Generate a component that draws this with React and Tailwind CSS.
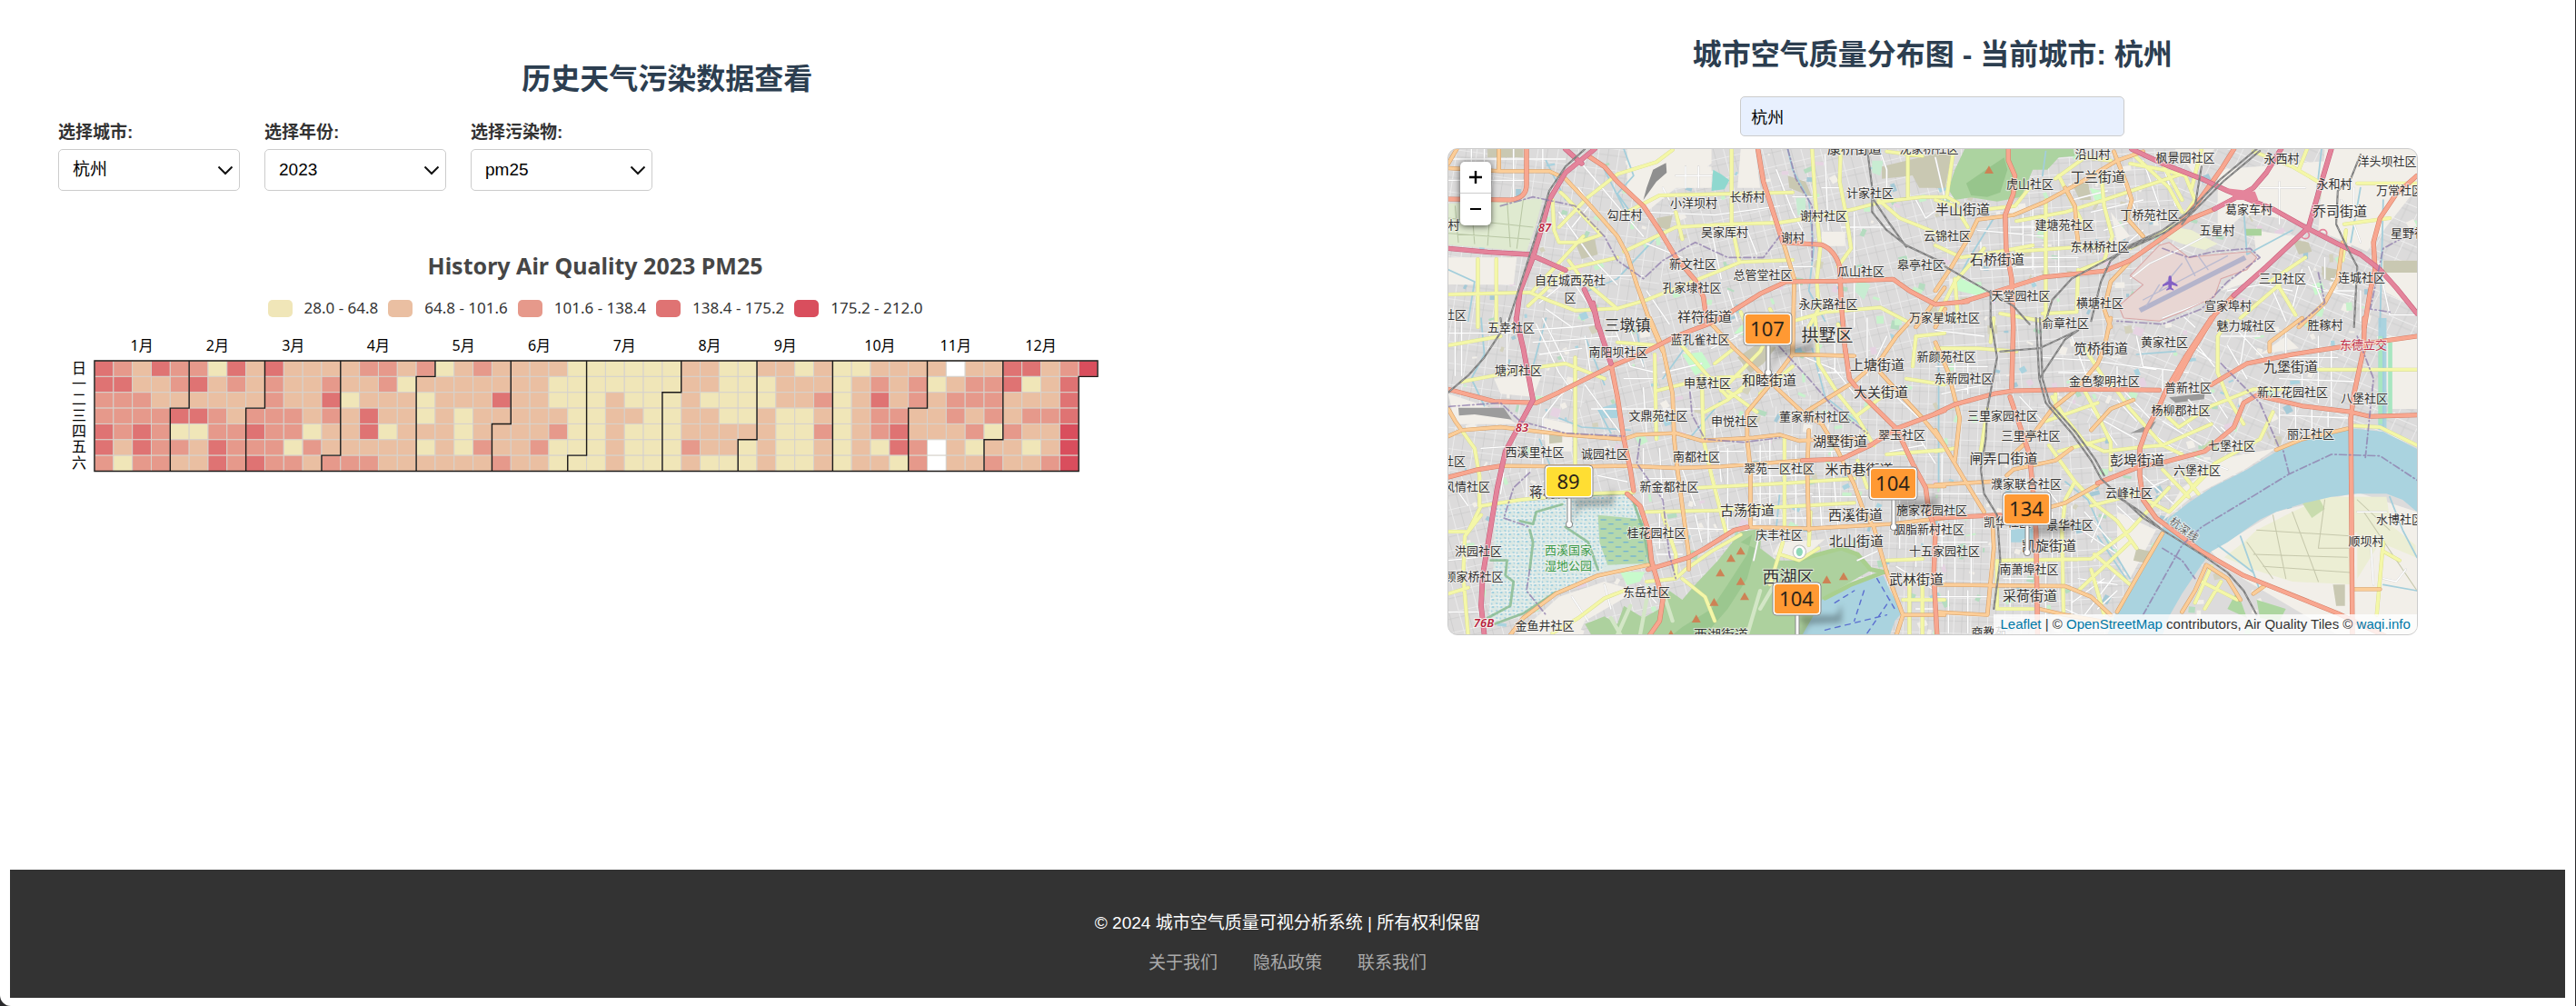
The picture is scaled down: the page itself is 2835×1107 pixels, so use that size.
import React from "react";

const SANS = "font-['Liberation_Sans','Noto_Sans_CJK_SC',sans-serif]";
const CHART_FONT = "font-['Noto_Sans','Noto_Sans_CJK_SC',sans-serif]";

/* ------------------------------------------------------------------ */
/* Calendar heat map                                                    */
/* ------------------------------------------------------------------ */

const LEVELS = {
  Y: "#f0e6b8",
  O: "#eabfa2",
  S: "#e6998b",
  R: "#df7373",
  D: "#d94e5d",
  W: "#ffffff",
};

const LEGEND = [
  ["28.0 - 64.8", "bg-[#f0e6b8]"],
  ["64.8 - 101.6", "bg-[#eabfa2]"],
  ["101.6 - 138.4", "bg-[#e6998b]"],
  ["138.4 - 175.2", "bg-[#df7373]"],
  ["175.2 - 212.0", "bg-[#d94e5d]"],
];

// One string per weekday, one letter per week of the year.
const WEEKDAY_ROWS = [
  "RSORSSYRO" + "ROOOOSSOS" + "YOSOOOOYY" + "YYYYOOYYOOYOYYOOOOWOORROSD",
  "RROOSROSO" + "SOOSOOSYO" + "OOOOOOYYY" + "YYYYOOYYYOOOYOSOSYOSSRYOR",
  "SSSOOOOOO" + "SOORYOOOY" + "OOOROOYYY" + "OYYYOYYYYOOSYOROSOSSSOOOR",
  "SSSSRRSOS" + "SSOSOROOY" + "OYOOOOOYY" + "OOYYOOYYOYYOYOSSOOSOSOSSR",
  "RSRSYYSSR" + "SSYOORYOO" + "OYOOOOSYY" + "OYYYOOOOOYYSYOSROOOSYSOOD",
  "RORSSORSS" + "SYSOOOOOY" + "OYSOOSYYY" + "OYYYSOOYOYYOYOYRSWOYOOYOD",
  "SYSSOORSR" + "SSOSSSOOO" + "OOOSOOYYY" + "OYYYOYYYOYYOYOOYSWOOSOOSD",
];

const WEEKDAYS = ["日", "一", "二", "三", "四", "五", "六"];
const MONTH_DAYS = [31, 28, 31, 30, 31, 30, 31, 31, 30, 31, 30, 31];

const CAL = { x: 104, y: 397, w: 20.83, h: 17.36 };

const monthStarts = MONTH_DAYS.map((_, i) =>
  MONTH_DAYS.slice(0, i).reduce((a, b) => a + b, 0)
);

function cx(col) {
  return CAL.x + col * CAL.w;
}
function cy(row) {
  return CAL.y + row * CAL.h;
}

function CalendarChart() {
  const boundary = (day) => {
    const col = Math.floor(day / 7);
    const row = day % 7;
    return row === 0
      ? `M${cx(col)} ${cy(0)}V${cy(7)}`
      : `M${cx(col + 1)} ${cy(0)}V${cy(row)}H${cx(col)}V${cy(7)}`;
  };
  return (
    <svg
      viewBox="64 366 1182 160"
      className={`mt-[15px] block h-auto w-full ${CHART_FONT}`}
      role="img"
      aria-label="History Air Quality 2023 PM25"
    >
      {WEEKDAY_ROWS.map((row, r) =>
        row.split("").map((k, c) => (
          <rect
            key={`${r}-${c}`}
            x={cx(c)}
            y={cy(r)}
            width={CAL.w}
            height={CAL.h}
            fill={LEVELS[k]}
            stroke="#d6d2cc"
            strokeWidth="1"
          />
        ))
      )}
      <g fill="none" stroke="#1c1a18" strokeWidth="1.4">
        {monthStarts.slice(1).map((d) => (
          <path key={d} d={boundary(d)} />
        ))}
        <path
          d={`M${cx(0)} ${cy(0)}H${cx(53)}V${cy(1)}H${cx(52)}V${cy(7)}H${cx(0)}Z`}
        />
      </g>
      <g fontSize="16" fill="#000" textAnchor="middle">
        {monthStarts.map((d, i) => {
          const first = Math.floor(d / 7);
          const last = Math.floor((d + MONTH_DAYS[i] - 1) / 7) + 1;
          return (
            <text key={d} x={cx((first + last) / 2)} y="386">
              {i + 1}月
            </text>
          );
        })}
        {WEEKDAYS.map((d, i) => (
          <text key={d} x="87" y={cy(i + 0.5) + 5}>
            {d}
          </text>
        ))}
      </g>
    </svg>
  );
}

/* ------------------------------------------------------------------ */
/* Map                                                                  */
/* ------------------------------------------------------------------ */

// Four survey sheets; each has its own origin in map units.
const SHEETS = {
  nw: [0, 0],
  ne: [1540, 0],
  sw: [0, 990],
  se: [1540, 990],
};

const AREAS = [
  // built-up gaps
  ["nw", "#f2efe9", "M590 432H850V480L740 560L650 640L590 560ZM740 490H850V560H740ZM1190 705H1262V752H1190ZM39 790H250L240 880H39ZM940 432H985L1000 560L930 560Z"],
  ["ne", "#f2efe9", "M870 500L1220 470L1150 680L960 640L870 720ZM1200 432H1484V560L1330 770L1180 700ZM1360 800H1484V960L1380 900ZM980 700L1110 720L970 870L880 900L990 790ZM740 432H860L800 520ZM540 640L600 720L560 740Z"],
  ["sw", "#f2efe9", "M180 200L330 180L300 260L200 250ZM39 250L180 300L250 350L60 350ZM380 920L520 870L620 900L460 1000L440 1046H250ZM330 330L420 350V440H340ZM1060 740L1200 730L1120 800L1040 780Z"],
  ["se", "#f2efe9", "M850 770L1050 640L1300 575L1484 640V1046H1240L900 830ZM700 670L790 590L960 495L1050 430L900 460L760 560ZM560 640L680 700L600 860L560 780ZM1000 120L1080 60L1120 100ZM1360 60H1484V300H1400Z"],
  // parks, farmland, woods
  ["nw", "#dfead0", "M39 612L330 596L310 680L280 770L39 748Z"],
  ["nw", "#c8ecd2", "M1110 590H1140V650H1115ZM1345 470L1380 470L1370 520L1345 510ZM1300 860L1340 880L1320 930L1290 900Z"],
  ["nw", "#8fd8cf", "M855 500L880 515L905 535L890 565L850 570Z"],
  ["nw", "#c9c8b2", "M1085 520L1140 540L1160 590L1090 560ZM1375 490L1568 440V560L1490 560L1470 520L1375 530ZM430 740L490 730L500 780L450 795ZM680 660L730 650L720 700L690 690ZM160 432H270V460H160Z"],
  ["ne", "#c9c8b2", "M0 450L50 450L30 560L0 560ZM420 545L445 600L480 600L470 540ZM1380 800H1484V840H1380ZM1100 730L1150 740L1160 770L1120 780ZM1190 820L1240 830L1225 870L1195 860Z"],
  ["ne", "#acd3a0", "M60 500L90 432H425L430 455L380 460L345 500L300 500L265 590L190 605L110 592L60 600L40 565Z"],
  ["ne", "#97c58c", "M95 545L170 490L212 460L222 500L200 575L160 590L110 585Z"],
  ["ne", "#c8facc", "M60 850L160 900L130 915L70 900ZM475 560L510 570L525 602L497 612ZM1160 880L1190 870L1200 900L1170 915Z"],
  ["ne", "#a9d39c", "M955 695H1005V718H955Z"],
  ["ne", "#ecefd2", "M700 720L760 745L830 765L870 745L790 700L740 690Z"],
  ["ne", "#e8d6d3", "M600 850L690 750L720 740L780 790L870 780L970 770L990 790L960 830L880 860L860 920L760 970L690 1000L580 990L565 950L640 880Z"],
  ["sw", "#dbe8e4", "M180 610L610 585L640 700L655 815L500 840L370 905L270 975L160 1010L180 800Z"],
  ["sw", "#b4d8ad", "M500 650L640 665L652 810L530 815L505 740Z"],
  ["sw", "#add19e", "M940 705L1005 695L1000 760L1050 800L1110 800L1250 760L1300 780L1345 830L1200 920L1190 940L1150 1046H480L460 1010L520 985L560 1010L580 950L640 990L690 960L720 900L760 930L800 880L870 800Z"],
  ["sw", "#9bc78f", "M940 740L975 715L960 780L900 880L850 960L760 1020L730 1046H830L900 960L960 860L985 760Z"],
  ["sw", "#aad3df", "M1190 930L1280 880L1380 850L1400 900L1440 970L1415 1000L1400 1046H1130L1160 990ZM500 300L560 280L560 330L520 330ZM1400 50L1420 60L1410 90Z"],
  ["sw", "#c9c8b2", "M930 130L985 90L1050 95L1010 150L970 182ZM350 385H390V410L350 415Z"],
  ["sw", "#c8facc", "M760 120L820 112L848 160L800 190ZM568 838H645L630 870L590 882ZM920 50L945 20L960 60Z"],
  ["se", "#eceed4", "M990 700L1100 640L1200 590L1390 590L1400 660L1290 710V880L1100 870L980 830L890 790L950 740ZM1300 660L1400 680L1480 750V790L1370 740L1300 860Z"],
  ["se", "#c9dcae", "M1130 610L1180 590L1200 630L1160 660ZM820 430L850 400L880 440Z"],
  ["se", "#add6a0", "M990 930L1080 960L1060 1000L1000 990ZM930 900L900 960L960 990Z"],
  ["se", "#aad3df", "M530 1046L555 975L600 890L680 730L720 660L780 610L850 560L960 500L1060 435L1150 400L1290 365L1380 375L1484 432V640L1440 600L1390 580L1300 580L1220 590L1140 610L1050 640L1000 665L900 740L850 770L810 830L760 910L720 985L700 1046ZM1365 0H1390V370H1365ZM230 700L300 690L300 740H230Z"],
  ["se", "#a8e6c0", "M1365 60H1380V350H1365ZM1395 80H1408V330H1395Z"],
  ["se", "#c9c8b2", "M620 760L660 770L650 810L610 800ZM1225 880H1262V950H1235Z"],
];

const ROAD_STYLES = [
  { key: "street", casing: "#cfcfcf", cw: 6, fill: "#ffffff", w: 4 },
  { key: "yellow", casing: "#d7da8c", cw: 12, fill: "#f4f7a8", w: 10 },
  { key: "orange", casing: "#d69c62", cw: 13, fill: "#fbcd98", w: 10 },
  { key: "salmon", casing: "#d57c64", cw: 15, fill: "#f8a790", w: 12 },
  { key: "pink", casing: "#c65a78", cw: 16, fill: "#e4849b", w: 13 },
];

const ROADS = {
  street: [
    ["nw", "M39 535H280M110 432V600M150 432V600M240 432V590M330 432V500M39 465H400M450 480L560 620L640 720M440 560L520 680M380 640L480 790L560 880M650 640L860 650L1060 620M740 520H850M770 490V560M810 490V560M1050 500L1100 640L1130 700M1100 590H1160M1290 640V1020M1190 560H1250M1200 450L1210 700M700 560L720 600M320 940L400 870L520 850L640 850M340 960L420 1020M430 880L480 960M850 700L880 860M960 700L990 780M640 740L760 790M480 610L420 690M1250 690H1400M1480 600L1510 660L1560 620M1100 900V1020M900 900L930 1000M650 900L720 1010M1060 820H1160M1120 870L1130 1010M1370 440L1390 500L1390 560"],
    ["ne", "M0 460L30 600M130 700L340 720M140 740V830L340 820M270 650V760M300 620V830M380 690V840M230 690H440M240 790H440M250 820H440M420 600L530 570M560 500L620 640M640 470L690 620M700 480L740 620M480 640L640 600M520 700L640 660M570 760L640 700M600 860L660 810L760 760L900 680M1060 540V680M1000 560H1140M1250 600L1290 680L1310 740M1290 560V660M1250 630H1330M900 900L1000 880L1100 900M1080 850L1200 900L1300 900M1130 830L1100 960M1150 820L1200 960M1220 860L1290 870M1210 900L1290 920M1200 790V860M1310 900V1000M1040 900L1080 1000M700 990L820 940M760 980L800 1020M1380 880L1400 980H1484"],
    ["sw", "M60 0V190M80 0V190M39 50H240M220 0V180M310 20L380 180L420 240M330 0L400 150M280 40L420 30L500 20M300 80L430 70L560 60M320 120L450 100M460 60L480 200M550 30L600 160L680 180M600 40L640 160M700 180L820 150M580 200L680 200M850 100L930 60M1000 20L920 60M1140 130L1230 170L1290 250M1180 180H1260M1230 60V180M1330 0V190M1390 60L1350 150M440 200L380 260L330 330V400M460 220L570 380M480 300H680M640 230L650 380M700 300H820M860 330V400M870 420L880 540M900 430V620M640 430V620M690 430L700 620M640 530H740M760 440H950M760 500L800 620M330 430V480M140 430L215 425M210 510L200 580M280 500V590M330 540L400 500M500 520L590 540M1000 420V680M1030 400V680M1110 420V680M980 440H1280M980 520H1140M980 580H1160M980 660H1290M1180 540L1190 690M1220 440L1240 690M1160 590H1330M650 690L960 700M690 640V760M800 650L820 740M840 640V740M900 640V700M670 740H760M680 780H760M100 620L60 560M39 800L130 790M39 970H140M420 920L470 1000M520 880L540 960M630 880L680 940M1000 700L980 800M1400 700L1568 720M1430 600V760M1480 640V820M1560 450V820M1420 820L1540 900M1470 870H1568M1480 960H1540M1300 800L1360 770M1480 380L1540 480M1400 440L1500 420M1420 260L1520 360"],
    ["se", "M0 40L150 60M60 100V230M100 100V250M0 160H160M20 250L150 220M260 260L330 340M280 400L380 380M330 130L480 140L680 170M380 180H500M420 60L480 230M560 160V230M700 170V240M620 60L640 160L780 180M760 160L800 100L850 140M800 80L860 160M900 90L960 200M930 40L1010 130M880 60L1000 60M960 20L940 150M1080 40V120M1130 150V250M1180 60V280M1220 100V290M1060 130H1240M1060 200L1300 210M1060 320L1270 330M1060 250L1060 380M1110 290V380M1160 300V390M1210 310V360M560 270L620 340M580 240L660 330M480 300L560 420M520 340L620 400M700 340L820 420M740 300L800 380M780 270L880 380M640 450L760 440M680 390L760 450M820 200L900 330M800 460L900 500M860 440L930 410M880 360L960 440M640 520L740 620M660 560L740 520M340 560L400 640M240 540L300 560M0 580L150 580M0 740H160M60 660V880M110 660V880M210 860H300M230 700V960M340 800V1000M360 640V800M420 620V980M450 700L560 780M460 640L560 760M520 640L480 740M560 620L620 680M440 860L560 880M420 940L520 860M460 980L560 840M500 960L560 900M400 960L480 1000M40 900V1040M100 900V1040M0 920H160M1340 720L1350 880M1380 860L1420 870L1450 830M1300 640H1390"],
  ],
  yellow: [
    ["nw", "M39 912L290 905L355 935L430 965L560 958L650 930L720 900L860 840L940 805L1100 798M130 795V1020M187 795V1020M285 950L330 905L400 830L560 790M360 600L365 700L380 740H440L510 715L400 590L385 575M380 690L470 590L560 515L680 475L730 435M580 770L740 690L900 680L1060 675L1180 655L1290 630L1380 605L1500 590H1568M590 640L690 585L900 580L1100 575M912 432V680L935 800M1160 432L1170 600L1185 760L1175 860M1248 432L1245 540L1265 650L1280 760L1240 820M1455 440V590M740 640L760 730M1365 600L1430 660L1500 690L1568 720M1390 440L1500 455M455 720L300 900M1100 1000L1200 970L1370 955L1450 1000M1030 960L1060 1020M940 970L960 1020M1175 870L1180 960L1150 1020M410 800L450 860L560 960"],
    ["ne", "M340 600V1000M250 670L400 640L520 600L770 510M250 770L450 755L520 760M600 480L700 500L770 520L800 600L750 680L650 730L600 760M510 500L520 620L545 720L520 800L450 830M370 530L460 460L540 470M55 440L35 590L70 610M0 750L80 790L200 770L300 750M0 1000L60 870L150 760M440 830L435 970L330 975M690 460L760 600M610 450L720 560L760 640M980 440L1100 490L1180 540M1145 432L1120 500M1260 680L1400 660M1484 545H1300M1265 700L1255 800M1030 870L1140 790M1055 880L1110 980M380 520L460 690M200 975L330 1000M0 600L60 620L100 690M165 630L245 620L290 560M820 432L790 560M940 990L1060 880M60 860L70 1000"],
    ["sw", "M39 90L200 60M80 210L130 200L330 160L400 150L520 200M430 130V480M39 705H100L140 620L260 600L450 580L610 575M80 370L120 430L135 520V620M140 650L90 720L85 850L100 1046M675 120L680 400M820 190L825 400L850 520L895 710M680 240L830 200L960 190M750 80L830 180L900 260L940 240M830 310L900 270L1000 180M650 640L860 635L1120 620L1290 610M810 560L1080 545L1290 530M1075 400V700M1170 0L1180 150L1240 250L1300 330L1350 420M1450 200L1568 220M1240 20L1260 80M760 860L830 920L860 1000M520 925L440 990L360 1040M520 925L580 900M650 870L740 860L770 830L850 770L940 715M700 650L740 780V860M1070 740L1030 880M1060 780L1120 800L1180 760M1390 800L1500 795M1440 930H1568M1460 860V1046M1500 860V1046M1390 450L1568 435M920 100L860 150M1050 0L1000 110L880 240M1300 470L1330 560M1568 50L1480 60L1470 160M560 80L680 90M900 240L990 310M1300 320L1400 240M39 910L100 890M1150 750L1155 640M1000 250L1100 160"],
    ["se", "M360 260L400 330L460 410L520 440L640 425L700 420L850 350M400 600L390 700L395 980M200 800L480 795L600 700L720 560M350 420L430 540L500 620L560 670L620 760M430 540L400 600M460 240L500 320L540 410V500M340 340L500 280M380 440L520 400M680 290L750 360L850 290L980 235H1080M870 60V180L900 260L950 350M870 60L900 10M460 100L520 200L560 240L600 300L700 420L760 450M790 560L860 480L1000 400L1040 310M760 510L810 580M650 600L720 640L840 510M700 500L780 590M480 620L620 580M0 100L130 100L250 110M180 0L170 80M490 780L600 880M440 900L600 740M480 830L520 980M190 800V960H300M850 820L800 940M880 870L830 960M820 870L930 930M1380 740L1360 980M1380 770L1430 800M1285 355L1370 360L1484 420M1180 170H1484M370 250V330M0 440L60 430M140 440L160 300"],
  ],
  orange: [
    ["nw", "M39 495L200 505H350L400 530L470 610L560 720L590 780L620 880L660 1000L700 1100M195 432V505M65 432L39 480M1060 700L1085 790L1105 860L1100 1110M1568 890L1480 1020"],
    ["ne", "M640 440L560 470L450 540L340 605L240 650L130 665L105 720L50 820L0 900M550 440L590 550L605 600L590 660L640 720M400 560L430 620L435 700L440 740M610 790L540 870L520 960L540 1020M1255 740L1240 860L1200 940L1120 1020M0 1020L30 960"],
    ["sw", "M39 390L80 370L200 360L400 385L580 400L620 385L740 380L820 405L980 395L1060 385L1120 405L1190 400L1300 400M39 300L60 340L80 370M200 488L430 490L590 488L740 495L880 490L1130 470M660 0L700 100L730 250L735 400L745 500L760 620L780 780V830M850 20L920 100L1000 180L1080 260L1140 320L1190 350L1240 440L1290 550L1320 640L1350 690L1390 840M1100 0V120L1290 125M1100 120L1030 220L960 310V400L970 500V690L1150 695L1400 680L1568 660M1150 370L1145 500L1150 700M1480 -10L1420 60L1375 130L1290 210L1140 310M655 815L500 850L370 910L270 990L230 1046M1440 980H1568M1390 840L1440 980L1420 1046M1370 180L1500 330L1568 420M1510 555H1568"],
    ["se", "M0 370L60 480L110 570L150 640M0 550L170 540M350 625L400 610L500 550M60 470L75 330L40 180L0 80M220 520L240 500L370 470L420 430M240 450L290 400L360 300L430 240L500 150L520 100L540 0M480 370L540 300L610 270M700 710L640 820L560 970M0 880L400 885L480 920L540 980M175 650L180 760L160 980L0 970M760 970L800 900L835 815L900 860L940 930M980 910L1020 880M1290 895H1370M1050 435L1130 400L1270 365M1030 110V80L1130 0M320 960L400 980L560 1010"],
  ],
  salmon: [
    ["nw", "M39 597L230 600Q280 595 280 550V432M470 455L520 490L560 540L640 620L690 700L740 790L800 865L825 920L835 1000M993 432L1010 540L1040 640L1070 740L1190 748Q1230 765 1245 820L1250 940L1262 1100M910 970L1000 910L1080 870L1240 868L1410 862L1460 900L1540 945L1640 935"],
    ["ne", "M860 630L780 665L680 740L600 800L520 835L330 855L240 885L80 938M920 432L880 500L800 620L760 670M225 432V470L245 520L240 580L215 650L218 760L235 860L240 1020L235 1220M920 915L860 980L790 1100L740 1200M1484 520L1420 580L1370 660L1350 740L1355 830L1340 900L1322 1020"],
    ["sw", "M39 235L180 275L310 280L380 245L540 160L650 110L740 60L840 20L910 -20M39 525L130 500L200 488M540 150L560 260L580 400L600 500L610 570M590 580L630 620L655 700L665 800L700 930L690 1000L660 1046M1262 100L1275 200L1320 260L1420 365L1470 480L1510 560L1520 640L1540 700L1535 850L1545 1046M1568 305L1420 365L1340 420L1250 465L1130 470M655 830L780 790L830 760L920 700L960 690"],
    ["se", "M0 315L60 285L180 250L240 240L480 235L690 238M850 0L770 130L710 240L690 290L650 370L630 430V520L640 600L680 660L820 770L950 850L1240 975L1484 1100M850 220L960 150L1100 120L1250 95L1484 60M1322 0L1320 100L1290 250L1280 330L1285 1046M500 545L630 490L690 480L830 440L920 360L950 280L990 255L1130 290L1280 310L1340 325L1484 320M230 260L290 450L300 560L310 700L315 1046M0 660L200 650"],
  ],
  pink: [
    ["nw", "M490 432L400 510L350 600L330 680L300 790L260 900L248 1000M39 760L160 772L290 780L400 832M400 432L450 480M458 895L490 970L500 1020"],
    ["ne", "M605 432L700 480L820 530L900 570L1040 630L1140 690L1240 745L1310 780L1370 830L1420 890L1484 975M1220 432L1190 540L1150 690L1100 740L1020 820L920 915M1065 432L1020 510L980 560L930 590L860 630"],
    ["sw", "M248 0L270 100L300 270L260 350L215 440L190 560L165 720L145 850L140 950L150 1046M485 -50L500 20L540 150"],
  ],
};

const RAILS = [
  ["nw", "M460 432L400 490L350 570L320 680L270 850L225 1000M1330 432L1345 560V640L1390 700L1450 750L1568 810M1350 600L1400 680L1450 755"],
  ["ne", "M990 432L880 530L780 640L700 700L600 750L540 800L510 870L480 1000M1000 438L890 536L788 646L706 708L604 758M700 700L420 860L360 930L340 1000M30 820L160 900L240 950L290 1010M820 490L800 620L760 680M1310 450L1280 530L1240 570L1235 680L1270 760L1300 820L1290 1020M170 900V1020"],
  ["sw", "M200 0L205 40L150 130L100 190L39 245"],
  ["se", "M170 0L190 130L160 300L155 400L140 500L150 580L190 650L200 800L180 960M310 0L320 200L340 280L420 380L480 470L510 530L580 600L640 660L820 780L900 840L950 900L990 980M322 0L330 200L352 280L432 376L492 466L520 520M200 110L320 100L440 40L400 70L320 200M560 590L620 630L700 700"],
];

const STREAMS = [
  ["nw", "M580 432L610 520L560 580L600 640M1085 432L1100 500L1150 600L1165 760L1150 900L1200 1000M520 500L600 670M340 470L400 600M470 900L560 860L700 700M39 830L120 870L100 1000"],
  ["ne", "M180 660L100 800L40 920M1190 432L1170 620M1380 600L1370 1020M950 630L960 780L1100 700M340 440L330 520M1310 560L1280 740"],
  ["sw", "M140 0L150 120L110 200L150 290M340 0L300 160M460 60L520 220M500 300L540 380M320 400L380 560M620 40L640 160M780 80L700 200M1160 100L1200 260L1330 370M860 300L780 400M380 330L450 360L600 370M1060 580L1050 690"],
  ["se", "M10 100V560M400 540L470 600L520 720L600 860M500 720L600 880M1380 60V360M620 120L740 110M940 720L1000 900M1380 880L1484 900M1400 590L1440 700L1484 790M870 750L980 840"],
];

const BOUNDARIES = [
  ["nw", "M200 620L300 590L430 620L520 720L560 800L640 860L700 800L800 740L900 790L1010 790L1060 720M1085 432L1110 530L1160 620L1160 800"],
  ["ne", "M700 760L780 790L860 770L970 760L1000 790L900 870L820 960L700 1010L560 1000M1180 840L1200 940L1120 1010M1484 700L1380 760L1340 960L1400 970"],
  ["sw", "M39 292L200 280L260 340L400 380L580 390M630 400L620 480L700 600L720 780L740 860M780 200L790 320L830 400L950 410L1060 395M1030 60L1150 200L1230 300L1330 380M290 510L240 560L210 660L290 690M290 830L280 900L340 980"],
  ["se", "M640 980L760 750L820 690L960 600L1090 515L1220 450L1370 455L1484 535M1090 515L1070 430M1325 460L1350 200L1300 60M880 150L1000 280L1060 430M700 760L760 800L800 860"],
];

const PEAKS = [
  ["ne", 165, 500], ["sw", 940, 768], ["sw", 910, 792], ["sw", 877, 840],
  ["sw", 940, 868], ["sw", 952, 918], ["sw", 858, 937], ["sw", 803, 992],
  ["sw", 1205, 863], ["sw", 1257, 852], ["sw", 725, 1043],
];

const LABELS = {
  nw: [
    ["康桥街道", 1290, 432, 15], ["沈家桥社区", 1520, 428], ["小洋坝村", 795, 610], ["长桥村", 960, 587],
    ["计家社区", 1338, 577], ["勾庄村", 582, 648], ["谢村社区", 1196, 652], ["吴家厍村", 891, 706],
    ["谢村", 1100, 722], ["新文社区", 791, 810], ["总管堂社区", 1008, 845], ["瓜山社区", 1310, 833],
    ["孔家埭社区", 790, 888], ["自在城西苑社", 413, 864], ["区", 413, 920], ["永庆路社区", 1210, 942],
    ["祥符街道", 829, 988, 15], ["皋亭社区", 1496, 814], ["村", 57, 680], ["社区", 60, 978],
    ["五幸社区", 232, 1021], ["三墩镇", 592, 1016, 17],
  ],
  ne: [
    ["沿山村", 485, 446], ["枫景园社区", 769, 458], ["永西村", 1066, 463], ["洋头坝社区", 1391, 470],
    ["虎山社区", 290, 545], ["丁兰街道", 500, 524, 15], ["永和村", 1228, 547], ["万常社区", 1431, 566],
    ["半山街道", 83, 634, 15], ["丁桥苑社区", 662, 648], ["葛家车村", 967, 630], ["乔司街道", 1247, 638, 15],
    ["建塘苑社区", 398, 682], ["五星村", 867, 700], ["星野社区", 1475, 707], ["云锦社区", 37, 718],
    ["东林桥社区", 508, 752], ["石桥街道", 190, 797, 15], ["三卫社区", 1069, 858], ["连城社区", 1312, 855],
    ["天堂园社区", 264, 916], ["横塘社区", 508, 940], ["宣家埠村", 901, 948], ["万家星城社区", 27, 986],
    ["俞章社区", 400, 1006], ["魅力城社区", 957, 1014], ["胜稼村", 1202, 1011],
  ],
  sw: [
    ["蓝孔雀社区", 815, 68], ["拱墅区", 1206, 62, 19], ["南阳坝社区", 562, 112], ["塘河社区", 255, 172],
    ["申慧社区", 836, 212], ["和睦街道", 1028, 208, 15], ["上塘街道", 1360, 155, 15], ["大关街道", 1372, 245, 15],
    ["新颜苑社区", 1573, 127], ["东新园社区", 1627, 198], ["文鼎苑社区", 686, 322], ["申悦社区", 922, 338],
    ["董家新村社区", 1168, 324], ["翠玉社区", 1435, 385], ["湖墅街道", 1247, 407, 15], ["西溪里社区", 305, 441],
    ["诚园社区", 522, 446], ["南都社区", 803, 456], ["翠苑一区社区", 1057, 494], ["米市巷街道", 1305, 500, 15],
    ["社区", 56, 470], ["风情社区", 95, 555], ["蒋村街道", 371, 577, 15], ["新金都社区", 719, 556],
    ["古荡街道", 960, 635, 15], ["西溪街道", 1294, 650, 15], ["施家花园社区", 1530, 632], ["胭脂新村社区", 1520, 696],
    ["桂花园社区", 681, 708], ["庆丰社区", 1057, 715], ["北山街道", 1297, 737, 15], ["洪园社区", 131, 768],
    ["顾家桥社区", 117, 853], ["十五家园社区", 1567, 768], ["西湖区", 1086, 862, 19], ["武林街道", 1481, 864, 15],
    ["东岳社区", 650, 903], ["金鱼井社区", 335, 1014], ["西湖街道", 879, 1048, 15],
  ],
  se: [
    ["笕桥街道", 509, 101, 15], ["黄家社区", 706, 78], ["九堡街道", 1095, 163, 15], ["金色黎明社区", 521, 206],
    ["普新社区", 777, 227], ["新江花园社区", 1100, 244], ["八堡社区", 1321, 264], ["杨柳郡社区", 755, 303],
    ["三里家园社区", 206, 320], ["三里亭社区", 293, 388], ["丽江社区", 1157, 382], ["七堡社区", 913, 421],
    ["闸弄口街道", 211, 464, 15], ["彭埠街道", 621, 470, 15], ["六堡社区", 807, 500], ["濮家联合社区", 281, 546],
    ["云峰社区", 595, 575], ["凯华社区", 220, 672], ["景华社区", 415, 680], ["水博社区", 1430, 664],
    ["顺坝村", 1327, 736], ["凯旋街道", 351, 753, 15], ["南萧埠社区", 287, 828], ["采荷街道", 292, 917, 15],
    ["商教苑", 165, 1035],
  ],
};

const MARKERS = [
  ["107", "sw", 948, -18, 180, "#ff9933"],
  ["89", "sw", 335, 485, 682, "#ffde33"],
  ["104", "sw", 1336, 493, 690, "#ff9933"],
  ["134", "se", 208, 577, 775, "#ff9933"],
  ["104", "sw", 1040, 873, 1070, "#ff9933"],
];

function at(sheet, u, v) {
  const [du, dv] = SHEETS[sheet];
  return [Math.round((u + du) / 2.8), Math.round((v + dv) / 3)];
}

// Small parks, ponds and plots scattered over the built-up area.
const PLOTS = (() => {
  let seed = 77;
  const next = () => {
    seed = (seed * 1103515245 + 12345) % 2147483648;
    return seed / 2147483648;
  };
  const tints = ["#c8f2cc", "#b5dcc0", "#aad3df", "#f2efe9", "#f2efe9", "#d3d1bd", "#e6d3e2", "#c8f2cc", "#a5c9d6"];
  return Array.from({ length: 620 }, () => ({
    x: Math.floor(40 + next() * 2980),
    y: Math.floor(432 + next() * 1600),
    w: Math.floor(6 + next() * 26),
    h: Math.floor(6 + next() * 24),
    a: Math.floor(next() * 60 - 30),
    fill: tints[Math.floor(next() * tints.length)],
  }));
})();

const BLOCKS = [
  ["streets-a", "M39 432H620L760 700L640 1000L300 1500H39Z"],
  ["streets-b", "M620 432H1560V1100L1000 1300L640 1000L760 700Z"],
  ["streets-c", "M1560 432H2300L2260 820L1900 1300L1560 1100Z"],
  ["streets-d", "M2300 432H3026V1400L2500 1500L1900 1300L2260 820Z"],
  ["streets-b", "M39 1500H300L640 1000L1000 1300L1400 2036H39Z"],
  ["streets-e", "M1000 1300L1560 1100L1900 1300L1960 1700L1860 2036H1400Z"],
  ["streets-c", "M1900 1300L2500 1500L2150 2036H1860L1960 1700Z"],
];

function StreetPattern({ id, w, h, angle }) {
  return (
    <pattern id={id} width={w} height={h} patternUnits="userSpaceOnUse" patternTransform={`rotate(${angle})`}>
      <path d={`M0 ${h / 3}H${w}M${w / 2} 0V${h}`} stroke="#c9c9c9" strokeWidth="2" fill="none" />
      <path d={`M0 0H${w}M0 0V${h}`} stroke="#eeeeee" strokeWidth="5" fill="none" />
    </pattern>
  );
}

function Sheet({ name, children }) {
  const [u, v] = SHEETS[name];
  return <g transform={`translate(${u} ${v})`}>{children}</g>;
}

function CityMap() {
  const halo = { stroke: "#f6f4f0", strokeWidth: 2, paintOrder: "stroke", strokeOpacity: 0.7 };
  const [parkX, parkY] = at("sw", 409, 764);
  const [railX, railY] = at("se", 760, 708);
  return (
    <svg
      viewBox="14 144 1066 534"
      preserveAspectRatio="xMidYMid slice"
      className="block h-auto w-full font-['Noto_Sans_CJK_SC',sans-serif]"
      role="img"
      aria-label="杭州空气质量地图"
    >
      <defs>
        <StreetPattern id="streets-a" w={62} h={70} angle={8} />
        <StreetPattern id="streets-b" w={58} h={66} angle={-14} />
        <StreetPattern id="streets-c" w={66} h={54} angle={-4} />
        <StreetPattern id="streets-d" w={72} h={60} angle={24} />
        <StreetPattern id="streets-e" w={52} h={58} angle={2} />
        <pattern id="wetland" width="26" height="24" patternUnits="userSpaceOnUse">
          <path d="M2 4h7v5h-4zM14 2l6 5-4 5zM5 14l6 2-2 6zM18 15h6v6h-8zM11 9l3 4" fill="#9fcfe0" />
          <path d="M0 12L12 11L14 24M12 11L14 0M26 12L14 14" stroke="#f5f7f5" strokeWidth="2" fill="none" />
        </pattern>
        <pattern id="marsh" width="46" height="30" patternUnits="userSpaceOnUse">
          <path d="M2 6H20M26 20H42" stroke="#5aa6e0" strokeWidth="3" />
        </pattern>
        <filter id="soft" x="-30%" y="-30%" width="160%" height="180%">
          <feGaussianBlur stdDeviation="3" />
        </filter>
      </defs>

      <g transform="scale(0.35714 0.33333)" strokeLinejoin="round" strokeLinecap="round">
        <rect x="0" y="400" width="3100" height="1700" fill="#dcdbdb" />
        {BLOCKS.map(([id, d]) => (
          <path key={d} d={d} fill={`url(#${id})`} />
        ))}
        {PLOTS.map((p, i) => (
          <rect
            key={i}
            x={p.x}
            y={p.y}
            width={p.w}
            height={p.h}
            fill={p.fill}
            transform={`rotate(${p.a} ${p.x} ${p.y})`}
          />
        ))}
        {AREAS.map(([s, fill, d]) => (
          <Sheet key={d} name={s}>
            <path d={d} fill={fill} />
          </Sheet>
        ))}
        <Sheet name="sw">
          <path
            d="M180 610L610 585L640 660L500 650L505 740L530 815L500 840L370 905L270 975L160 1010L180 800Z"
            fill="url(#wetland)"
          />
          <path d="M500 650L640 665L652 810L530 815L505 740Z" fill="url(#marsh)" />
          <path
            d="M230 602L600 577L640 700L660 815M260 670L300 680L310 640L390 615M290 830L300 740L290 700M170 800H220L215 850L240 870L230 950L160 990M400 690L470 740L500 830M370 905L270 975L180 1010"
            fill="none"
            stroke="#84b98c"
            strokeWidth="8"
            strokeOpacity="0.8"
          />
          <path d="M70 296L210 296L235 335L120 318L72 322Z" fill="#9c9c9c" />
          <path
            d="M1230 940L1290 900M1320 900L1290 1000M1360 860L1420 970M1200 1030L1390 980M1330 1040L1400 930"
            stroke="#5b6fd0"
            strokeWidth="4"
            strokeDasharray="16 16"
            fill="none"
          />
          <path d="M1110 800L1250 760L1300 780L1340 830L1390 840M1200 925L1280 880L1390 835" stroke="#a9cf8e" strokeWidth="14" fill="none" />
          <path d="M600 950L560 1046M650 930L630 1046M540 990L570 1046M700 900L730 1000M1000 900L960 1046M1060 850L1000 960" stroke="#d3e6c6" strokeWidth="12" fill="none" />
        </Sheet>
        <Sheet name="nw">
          <path d="M650 560L670 500L710 478L712 510L680 540L640 600Z" fill="#8f8f8f" />
          <path d="M60 620L70 740M110 610L120 745M170 605L160 750M220 600L230 755M270 600L250 760M39 660L300 690M39 710L290 730" stroke="#b9c7a5" strokeWidth="3" fill="none" />
        </Sheet>
        <Sheet name="se">
          <path d="M720 262L830 248L828 268L740 280ZM600 380L680 340L660 375Z" fill="#999" />
          <path
            d="M960 740L1040 860M1040 650L1080 860M1100 640L1180 870M1200 600L1180 760L1290 760M990 700L1290 720M980 780L1270 790M1010 820L1280 840M1300 600L1400 700M1320 640L1484 900"
            stroke="#c6c8ac"
            strokeWidth="3"
            fill="none"
          />
        </Sheet>
        {STREAMS.map(([s, d]) => (
          <Sheet key={d} name={s}>
            <path d={d} fill="none" stroke="#a3cedb" strokeWidth="5" />
          </Sheet>
        ))}
        {ROAD_STYLES.map((style) => (
          <g key={style.key} fill="none">
            {ROADS[style.key].map(([s, d]) => (
              <Sheet key={d} name={s}>
                <path d={d} stroke={style.casing} strokeWidth={style.cw} />
              </Sheet>
            ))}
            {ROADS[style.key].map(([s, d]) => (
              <Sheet key={d} name={s}>
                <path d={d} stroke={style.fill} strokeWidth={style.w} />
              </Sheet>
            ))}
          </g>
        ))}
        <Sheet name="ne">
          <path d="M898 562L985 572L995 600L925 600Z" fill="#e4849b" />
          <g fill="none" stroke="#e4849b" strokeWidth="5">
            <circle cx="1140" cy="716" r="12" />
            <circle cx="1194" cy="710" r="12" />
          </g>
          <path
            d="M600 850L690 750L720 740L780 790L870 780L970 770L990 790L960 830L880 860L860 920L760 970L690 1000L580 990L565 950L640 880Z"
            fill="none"
            stroke="#d9a5a5"
            strokeWidth="3"
          />
          <path d="M630 965L955 790" stroke="#b4b4cb" strokeWidth="16" strokeLinecap="butt" />
          <path d="M640 930L900 785M690 900L760 810M800 850L770 790M840 830L810 785M650 950L690 880" stroke="#bbbbd0" strokeWidth="4" fill="none" />
          <path
            d="M723 850Q728 850 728 860V868L746 880V886L728 880V890L734 895V899L723 895L712 899V895L718 890V880L700 886V880L718 868V860Q718 850 723 850Z"
            fill="#8461c4"
          />
        </Sheet>
        {RAILS.map(([s, d]) => (
          <Sheet key={d} name={s}>
            <path d={d} fill="none" stroke="#7d7d7d" strokeWidth="6" />
            <path d={d} fill="none" stroke="#b4b4b4" strokeWidth="2" strokeDasharray="12 12" />
          </Sheet>
        ))}
        {BOUNDARIES.map(([s, d]) => (
          <Sheet key={d} name={s}>
            <path d={d} fill="none" stroke="#8d7bab" strokeOpacity="0.75" strokeWidth="5" strokeDasharray="22 9 4 9" />
          </Sheet>
        ))}
        {PEAKS.map(([s, x, y]) => (
          <Sheet key={`${s}${x}${y}`} name={s}>
            <path d={`M${x} ${y - 13}L${x + 14} ${y + 13}H${x - 14}Z`} fill="#cd8255" />
          </Sheet>
        ))}
        <Sheet name="sw">
          <ellipse cx="1121" cy="772" rx="20" ry="22" fill="#fff" stroke="#bbb" strokeWidth="3" />
          <ellipse cx="1121" cy="772" rx="10" ry="14" fill="#8fd8b8" />
        </Sheet>
      </g>

      <g textAnchor="middle" fill="#333">
        {Object.entries(LABELS).map(([s, list]) =>
          list.map(([text, u, v, size = 13]) => {
            const [x, y] = at(s, u, v);
            return (
              <text key={`${s}${text}${u}`} x={x} y={y + 5} fontSize={size} {...halo}>
                {text}
              </text>
            );
          })
        )}
        <g fill="#3a9a4a" fontSize="13" {...halo}>
          <text x={parkX} y={parkY + 5}>西溪国家</text>
          <text x={parkX} y={parkY + 22}>湿地公园</text>
        </g>
        <text x={at("se", 1320, 86)[0]} y={at("se", 1320, 86)[1] + 5} fontSize="13" {...halo} fill="#c0304a">
          东德立交
        </text>
        <text x={railX} y={railY} fontSize="12" {...halo} fill="#666" transform={`rotate(38 ${railX} ${railY})`}>
          杭深线
        </text>
        <g fill="#b8203c" fontSize="13" fontStyle="italic" fontWeight="600" fontFamily="Noto Sans" {...halo} strokeOpacity="1">
          <text x={at("nw", 335, 690)[0]} y={at("nw", 335, 690)[1] + 5}>87</text>
          <text x={at("sw", 265, 360)[0]} y={at("sw", 265, 360)[1] + 5}>83</text>
          <text x={at("sw", 147, 1006)[0]} y={at("sw", 147, 1006)[1] + 5}>76B</text>
        </g>
      </g>

      {MARKERS.map(([value, s, u, v, tip, fill]) => {
        const [x, y] = at(s, u, v);
        const tipY = at(s, u, tip)[1];
        return (
          <g key={`${value}${u}`}>
            <path
              d={`M${x + 27} ${tipY}L${x + 36} ${y + 44}H${x + 30}V${y + 36}H${x + 70}L${x + 76} ${y + 24}V${y + 44}L${x + 40} ${y + 46}Z`}
              fill="#000"
              fillOpacity="0.28"
              filter="url(#soft)"
            />
            <path d={`M${x + 27} ${y + 35}V${tipY}`} stroke="#888" strokeWidth="5" />
            <circle cx={x + 27} cy={tipY} r="4" fill="#888" />
            <path d={`M${x + 27} ${y + 35}V${tipY}`} stroke="#fff" strokeWidth="3" />
            <circle cx={x + 27} cy={tipY} r="3" fill="#fff" />
            <rect x={x} y={y} width="53" height="36" rx="4" fill="#fff" stroke="#8a8a8a" strokeWidth="1" />
            <rect x={x + 2} y={y + 2} width="49" height="32" rx="3" fill={fill} />
            <text
              x={x + 26}
              y={y + 26}
              fontSize="22"
              fontFamily="Noto Sans"
              textAnchor="middle"
              fill="#2b2419"
            >
              {value}
            </text>
          </g>
        );
      })}
    </svg>
  );
}

/* ------------------------------------------------------------------ */
/* Page                                                                 */
/* ------------------------------------------------------------------ */

function SelectField({ id, label, options }) {
  return (
    <div className="flex w-[200px] flex-col gap-1">
      <label htmlFor={id} className="text-[19px] leading-7 font-bold text-[#333]">
        {label}
      </label>
      <div className="relative">
        <select
          id={id}
          className="h-[46px] w-full appearance-none rounded-[5px] border border-[#ccc] bg-white px-[15px] text-[19px] text-black"
        >
          {options.map((o) => (
            <option key={o}>{o}</option>
          ))}
        </select>
        <svg
          viewBox="0 0 18 11"
          className="pointer-events-none absolute top-[18px] right-[7px] h-[11px] w-[18px]"
          fill="none"
          stroke="#111"
          strokeWidth="2"
        >
          <path d="M1.5 1.5L9 9L16.5 1.5" />
        </svg>
      </div>
    </div>
  );
}

function HistoryPanel() {
  return (
    <section className="min-w-0 px-[26px] pt-[63px]">
      <h1 className="text-center text-[32px] leading-[48px] font-bold text-[#2c3e50]">
        历史天气污染数据查看
      </h1>
      <form className="mt-[21px] flex flex-wrap gap-[27px]">
        <SelectField id="city" label="选择城市:" options={["杭州"]} />
        <SelectField id="year" label="选择年份:" options={["2023"]} />
        <SelectField id="pollutant" label="选择污染物:" options={["pm25"]} />
      </form>
      <div className={`mt-[66px] w-full max-w-[1182px] ${CHART_FONT}`}>
        <h2 className="text-center text-[25px] leading-8 font-bold text-[#464646]">
          History Air Quality 2023 PM25
        </h2>
        <ul className="mt-[19px] flex flex-wrap justify-center gap-[11px]">
          {LEGEND.map(([text, swatch]) => (
            <li key={text} className="flex items-center gap-[13px] text-[17px] leading-6 text-[#333]">
              <span className={`h-[19px] w-[27px] rounded-[5px] ${swatch}`} />
              {text}
            </li>
          ))}
        </ul>
        <CalendarChart />
      </div>
    </section>
  );
}

function MapPanel() {
  return (
    <section className="flex min-w-0 flex-col items-center pt-9">
      <h1 className="text-center text-[32px] leading-[48px] font-bold text-[#2c3e50]">
        城市空气质量分布图 - 当前城市: 杭州
      </h1>
      <input
        type="text"
        aria-label="城市"
        defaultValue="杭州"
        className="mt-[22px] h-11 w-full max-w-[423px] rounded-[5px] border border-[#ccc] bg-[#e8f0fe] px-[11px] text-lg text-black"
      />
      <div className="relative mt-[13px] w-full max-w-[1068px] overflow-hidden rounded-[11px] border border-[#ccc] bg-[#ddd]">
        <CityMap />
        <div className="absolute top-[14px] left-[13px] flex w-[34px] flex-col overflow-hidden rounded-[5px] bg-white shadow-[0_1px_7px_rgba(0,0,0,0.65)]">
          <button type="button" aria-label="放大" className="flex h-[35px] items-center justify-center border-b border-[#ccc]">
            <svg viewBox="0 0 14 14" className="h-[14px] w-[14px]" stroke="#000" strokeWidth="2.4">
              <path d="M7 0V14M0 7H14" />
            </svg>
          </button>
          <button type="button" aria-label="缩小" className="flex h-[35px] items-center justify-center">
            <svg viewBox="0 0 14 14" className="h-[14px] w-[14px]" stroke="#000" strokeWidth="2">
              <path d="M1 6H13" />
            </svg>
          </button>
        </div>
        <p className="absolute right-0 bottom-0 bg-white/80 px-[7px] text-[15px] leading-[22px] text-[#333]">
          <a href="#leaflet" className="text-[#0078a8]">Leaflet</a> | ©{" "}
          <a href="#osm" className="text-[#0078a8]">OpenStreetMap</a> contributors, Air Quality Tiles ©{" "}
          <a href="#waqi" className="text-[#0078a8]">waqi.info</a>
        </p>
      </div>
    </section>
  );
}

export default function App() {
  return (
    <div className="min-h-screen bg-[#2a2a2c]">
      <div className={`mr-px min-h-screen rounded-bl-[12px] bg-white px-[11px] pb-[9px] ${SANS}`}>
        <main className="grid grid-cols-2 pb-[258px] pl-[27px]">
          <HistoryPanel />
          <MapPanel />
        </main>
        <footer className="bg-[#333] pt-11 pb-6 text-center text-[19px] leading-[29px] text-white">
          <p>© 2024 城市空气质量可视分析系统 | 所有权利保留</p>
          <nav className="mt-[15px] flex justify-center gap-[39px] text-[#aaa]">
            <a href="#about">关于我们</a>
            <a href="#privacy">隐私政策</a>
            <a href="#contact">联系我们</a>
          </nav>
        </footer>
      </div>
    </div>
  );
}
